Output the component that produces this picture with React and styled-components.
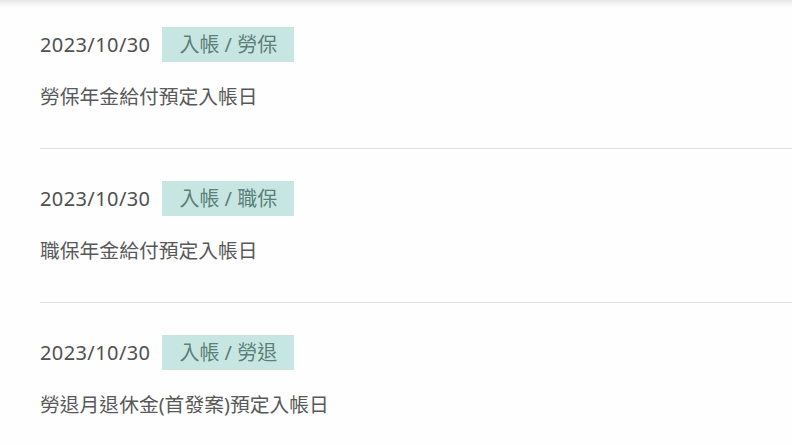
import React from "react";
import styled, { createGlobalStyle } from "styled-components";

const GlobalStyle = createGlobalStyle`
  html, body {
    margin: 0;
    padding: 0;
    background: #ffffff;
  }
  body {
    font-family: "Noto Sans", "Noto Sans CJK TC", sans-serif;
    overflow: hidden;
  }
`;

const Page = styled.div`
  position: relative;
  width: 792px;
  height: 445px;
  overflow: hidden;
  background: #fefefe;
`;

const TopShadow = styled.div`
  position: absolute;
  top: 0;
  left: 0;
  right: 0;
  height: 8px;
  background: linear-gradient(to bottom, #e6e6e6 0%, #f3f3f3 45%, rgba(255, 255, 255, 0) 100%);
  pointer-events: none;
`;

const List = styled.ul`
  list-style: none;
  margin: 0;
  padding: 0 0 0 40px;
`;

const Item = styled.li`
  padding: 32px 0 36px;
  border-bottom: 1.5px solid #e0e0e0;

  &:first-child {
    padding-top: 27px;
  }
`;

const Head = styled.div`
  display: flex;
  align-items: center;
  gap: 12px;
  height: 35px;
`;

const DateText = styled.span`
  font-family: "Noto Sans", "Noto Sans CJK TC", sans-serif;
  font-size: 20px;
  letter-spacing: 0.4px;
  color: #505050;
  line-height: 35px;
`;

const Badge = styled.span`
  display: inline-flex;
  align-items: center;
  height: 35px;
  padding: 0 17px;
  background: #c8e6e1;
  color: #5b7f79;
  font-family: "Noto Sans", "Noto Sans CJK TC", sans-serif;
  font-size: 20px;
  line-height: 35px;
  white-space: pre;
`;

const Desc = styled.p`
  margin: 20px 0 0;
  font-family: "Noto Sans", "Noto Sans CJK TC", sans-serif;
  font-size: 19.8px;
  line-height: 30px;
  color: #595959;
`;

const items = [
  { date: "2023/10/30", tag: "入帳 / 勞保", desc: "勞保年金給付預定入帳日" },
  { date: "2023/10/30", tag: "入帳 / 職保", desc: "職保年金給付預定入帳日" },
  { date: "2023/10/30", tag: "入帳 / 勞退", desc: "勞退月退休金(首發案)預定入帳日" },
];

export default function App() {
  return (
    <Page>
      <GlobalStyle />
      <List>
        {items.map((it, i) => (
          <Item key={i}>
            <Head>
              <DateText>{it.date}</DateText>
              <Badge>{it.tag}</Badge>
            </Head>
            <Desc>{it.desc}</Desc>
          </Item>
        ))}
      </List>
      <TopShadow />
    </Page>
  );
}
